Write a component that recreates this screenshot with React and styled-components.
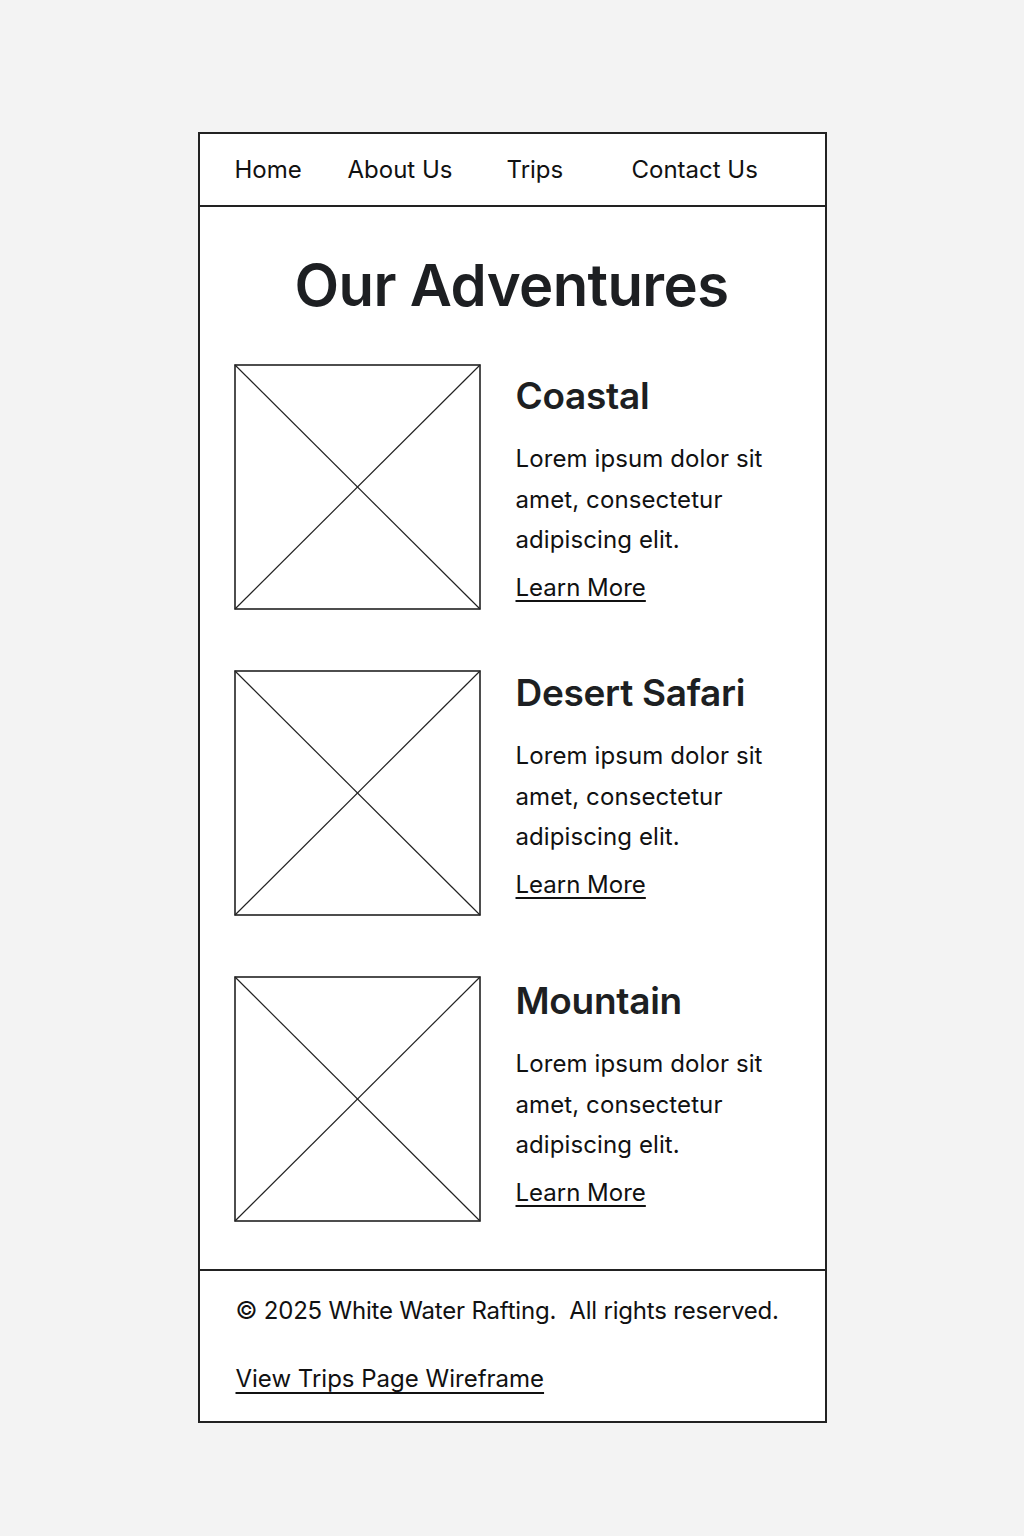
import React from "react";
import styled, { createGlobalStyle } from "styled-components";

const Global = createGlobalStyle`
  html, body { margin: 0; padding: 0; background: #f3f3f3; }
  body { font-family: Inter, "Noto Sans", sans-serif; color: #1d1f22; }
`;

const Page = styled.div`
  padding-top: 132px;
  padding-bottom: 115px;
`;

const Frame = styled.div`
  width: 629px;
  margin: 0 auto;
  box-sizing: border-box;
  border: 2px solid #222;
  background: #fff;
  display: flex;
  flex-direction: column;
`;

const Nav = styled.nav`
  height: 71px;
  border-bottom: 2px solid #222;
  display: grid;
  grid-template-columns: 113px 159px 125px auto;
  align-items: center;
  padding-left: 35px;
`;

const NavItem = styled.a`
  font-size: 24px;
  color: #111;
  text-decoration: none;
`;

const Main = styled.main`
  padding: 45px 35px 47px 34px;
  border-bottom: 2px solid #222;
`;

const Title = styled.h1`
  margin: 0 0 46px;
  text-align: center;
  font-size: 58px;
  font-weight: 600;
  line-height: 66px;
  letter-spacing: -0.6px;
  color: #1d1f22;
`;

const Cards = styled.div`
  display: flex;
  flex-direction: column;
  gap: 60px;
`;

const Card = styled.article`
  display: flex;
  gap: 35px;
`;

const Placeholder = styled.svg`
  width: 247px;
  height: 246px;
  flex: none;
  display: block;
`;

const Body = styled.div`
  display: flex;
  flex-direction: column;
  padding-top: ${(p) => p.$offset}px;
`;

const CardTitle = styled.h2`
  margin: 0 0 21px;
  font-size: 37px;
  font-weight: 600;
  line-height: 44px;
  letter-spacing: -0.3px;
  color: #1d1f22;
`;

const Text = styled.p`
  margin: 0;
  font-size: 24px;
  line-height: 40.5px;
  letter-spacing: 0.1px;
  color: #111;
  width: 270px;
`;

const LearnMore = styled.a`
  align-self: flex-start;
  margin-top: 9px;
  font-size: 24px;
  line-height: 36px;
  color: #111;
  text-decoration: underline;
  text-decoration-thickness: 1.5px;
  text-underline-offset: 4px;
`;

const Footer = styled.footer`
  padding: 22px 36px 24px;
  display: flex;
  flex-direction: column;
  gap: 32px;
`;

const Copy = styled.p`
  margin: 0;
  font-size: 24px;
  line-height: 36px;
  color: #111;
  letter-spacing: -0.2px;
  white-space: pre;
`;

const FootLink = styled.a`
  align-self: flex-start;
  font-size: 24px;
  line-height: 36px;
  color: #111;
  text-decoration: underline;
  text-decoration-thickness: 1.5px;
  text-underline-offset: 5px;
`;

const trips = [
  { name: "Coastal", offset: 10 },
  { name: "Desert Safari", offset: 1 },
  { name: "Mountain", offset: 3 },
];

function Box() {
  return (
    <Placeholder viewBox="0 0 247 246">
      <rect x="1" y="1" width="245" height="244" fill="#fff" stroke="#222" strokeWidth="1.6" />
      <line x1="1" y1="1" x2="246" y2="245" stroke="#222" strokeWidth="1.2" />
      <line x1="246" y1="1" x2="1" y2="245" stroke="#222" strokeWidth="1.2" />
    </Placeholder>
  );
}

export default function App() {
  return (
    <>
      <Global />
      <Page>
        <Frame>
          <Nav>
            <NavItem href="#">Home</NavItem>
            <NavItem href="#">About Us</NavItem>
            <NavItem href="#">Trips</NavItem>
            <NavItem href="#">Contact Us</NavItem>
          </Nav>
          <Main>
            <Title>Our Adventures</Title>
            <Cards>
              {trips.map((t) => (
                <Card key={t.name}>
                  <Box />
                  <Body $offset={t.offset}>
                    <CardTitle>{t.name}</CardTitle>
                    <Text>Lorem ipsum dolor sit amet, consectetur adipiscing elit.</Text>
                    <LearnMore href="#">Learn More</LearnMore>
                  </Body>
                </Card>
              ))}
            </Cards>
          </Main>
          <Footer>
            <Copy>{"© 2025 White Water Rafting.  All rights reserved."}</Copy>
            <FootLink href="#">View Trips Page Wireframe</FootLink>
          </Footer>
        </Frame>
      </Page>
    </>
  );
}
